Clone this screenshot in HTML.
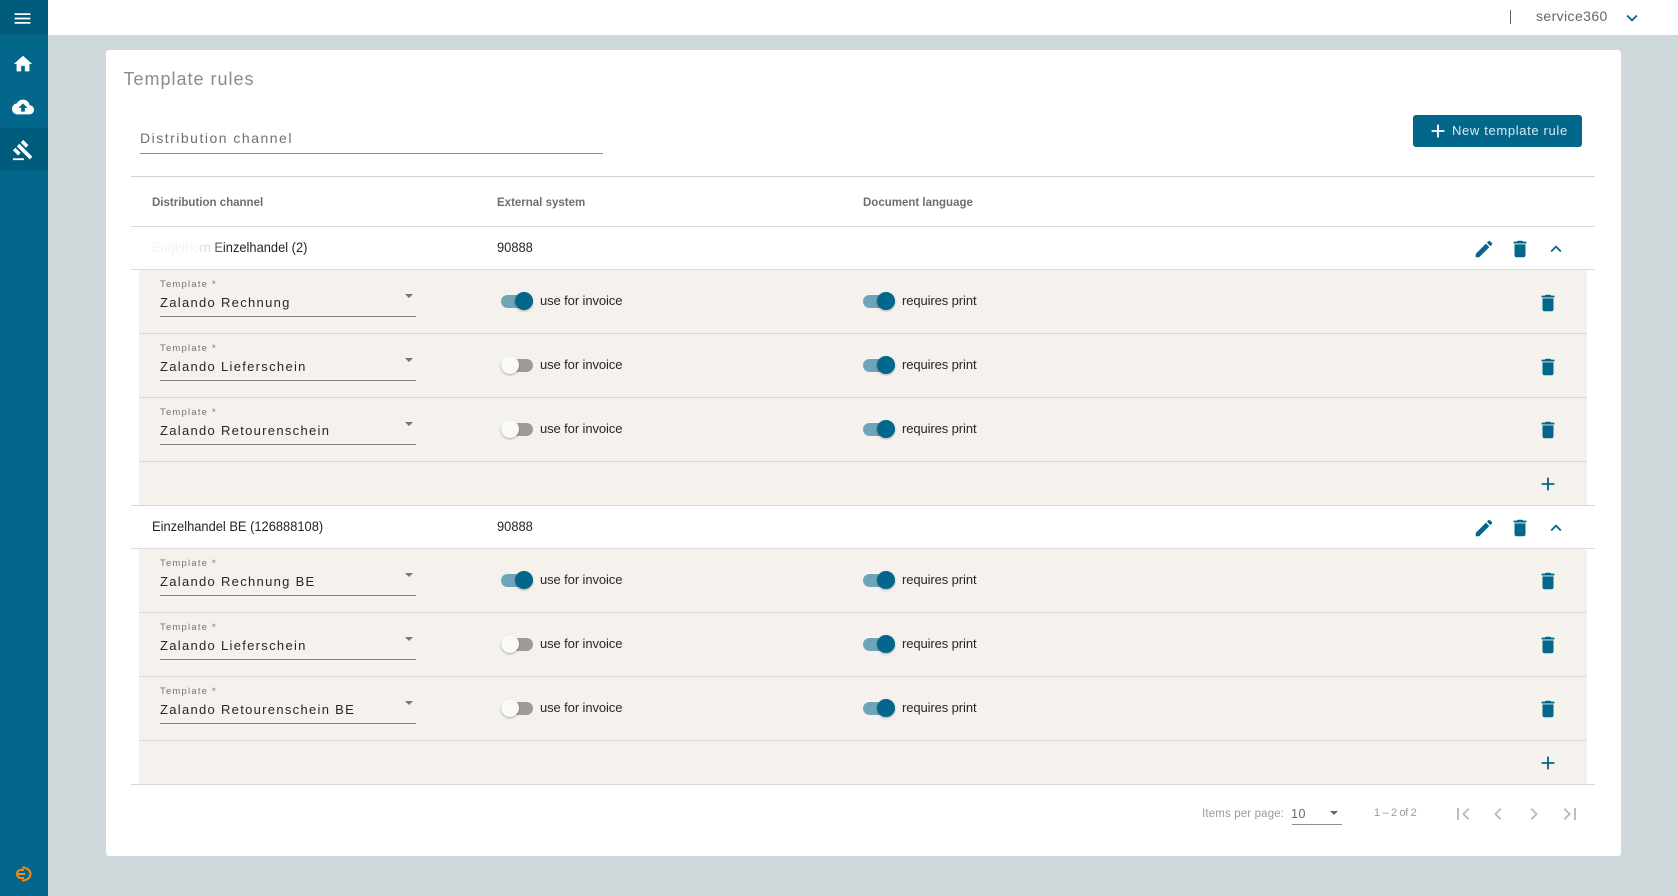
<!DOCTYPE html>
<html><head><meta charset="utf-8"><title>Template rules</title>
<style>
*{box-sizing:border-box}
html,body{margin:0;padding:0;width:1678px;height:896px;overflow:hidden;background:#cfd8db;font-family:"Liberation Sans",sans-serif}
.a,.t,svg.i{position:absolute}
.t{white-space:nowrap;line-height:16px}
svg.i{width:24px;height:24px;fill:#02678a}
svg.s{width:22px;height:22px;margin:1px}
.side{left:0;top:0;width:48px;height:896px;background:#02678a}
.top{left:48px;top:0;width:1630px;height:35px;background:#fff}
.card{left:106px;top:50px;width:1515px;height:806px;background:#fff;border-radius:3px}
.ln{position:absolute;height:1px;background:#dcdcdc}
.row{position:absolute;left:139px;width:1448px;height:64px;background:#f5f2ee;border-bottom:1px solid #dcd9d5}
.row .lb{left:21px;top:7px;font-size:9.5px;letter-spacing:1.2px;color:#77746f}
.row .v{left:21px;top:25px;font-size:13px;letter-spacing:1.3px;color:#26262b}
.row .u{position:absolute;left:21px;top:46px;width:256px;height:1px;background:#85827e}
.row .ar{position:absolute;left:266px;top:24px;width:0;height:0;border-left:4px solid transparent;border-right:4px solid transparent;border-top:4px solid #77746f}
.tr{position:absolute;top:25px;width:32px;height:13px;border-radius:7px}
.on{background:#6fa5b9}.off{background:#9e9b97}
.kn{position:absolute;top:-3px;width:18px;height:18px;border-radius:50%;box-shadow:0 1px 2px rgba(0,0,0,.3)}
.on .kn{left:14px;background:#02678a}.off .kn{left:0;background:#f9f9f9}
.sl{top:23px;font-size:13px;letter-spacing:-.1px;color:#26262b}
.nm{font-size:14px;color:#1f2328;transform:scaleX(.92);transform-origin:left center}
.hd{font-size:11.5px;font-weight:bold;color:#6f6f72;top:195px}
</style></head><body>
<svg width="0" height="0" style="position:absolute"><defs>
<symbol id="del" viewBox="0 0 24 24"><path d="M6 19c0 1.1.9 2 2 2h8c1.1 0 2-.9 2-2V7H6v12zM19 4h-3.5l-1-1h-5l-1 1H5v2h14V4z"/></symbol>
<symbol id="edit" viewBox="0 0 24 24"><path d="M3 17.25V21h3.75L17.81 9.94l-3.75-3.75L3 17.25zM20.71 7.04c.39-.39.39-1.02 0-1.41l-2.34-2.34c-.39-.39-1.02-.39-1.41 0l-1.83 1.83 3.75 3.75 1.83-1.83z"/></symbol>
<symbol id="up" viewBox="0 0 24 24"><path d="M12 8l-6 6 1.41 1.41L12 10.83l4.59 4.58L18 14z"/></symbol>
<symbol id="add" viewBox="0 0 24 24"><path d="M19 13h-6v6h-2v-6H5v-2h6V5h2v6h6v2z"/></symbol>
</defs></svg>

<div class="a side"></div>
<div class="a" style="left:0;top:0;width:48px;height:35px;background:#005c7c"></div>
<div class="a" style="left:0;top:128px;width:48px;height:43px;background:#005c7c"></div>
<svg class="i" style="left:12px;top:8px;width:21px;height:21px;fill:#fff" viewBox="0 0 24 24"><path d="M3 18h18v-2H3v2zm0-5h18v-2H3v2zm0-7v2h18V6H3z"/></svg>
<svg class="i s" style="left:11px;top:52px;fill:#fff" viewBox="0 0 24 24"><path d="M10 20v-6h4v6h5v-8h3L12 3 2 12h3v8z"/></svg>
<svg class="i s" style="left:11px;top:95px;fill:#fff" viewBox="0 0 24 24"><path d="M19.35 10.04C18.67 6.59 15.64 4 12 4 9.11 4 6.6 5.64 5.35 8.04 2.34 8.36 0 10.91 0 14c0 3.31 2.69 6 6 6h13c2.76 0 5-2.24 5-5 0-2.64-2.05-4.78-4.65-4.96zM14 13v4h-4v-4H7l5-5 5 5h-3z"/></svg>
<svg class="i s" style="left:11px;top:138px;fill:#fff" viewBox="0 0 24 24"><path d="M1 21h12v2H1zM5.245 8.07l2.83-2.827 14.14 14.142-2.828 2.828zM12.317 1l5.657 5.656-2.83 2.83-5.654-5.66zM3.825 9.485l5.657 5.657-2.828 2.828-5.657-5.657z"/></svg>
<svg class="a" style="left:15px;top:866px;width:17px;height:16px" viewBox="0 0 17 16" fill="none" stroke="#f08a12" stroke-width="2"><path d="M9 4H5.5C3.5 4 2 6 2 8s1.500 4 3.500 4H9M3 8h7M7 1.500c5 0 8.500 3 8.500 6.500S12 14.500 7 14.500"/></svg>

<div class="a top"></div>
<div class="a" style="left:1510px;top:10px;width:1px;height:14px;background:#666"></div>
<div class="t" style="left:1536px;top:8px;font-size:14px;letter-spacing:.4px;color:#66666a">service360</div>
<svg class="i s" style="left:1620px;top:6px" viewBox="0 0 24 24"><path d="M16.59 8.59L12 13.17 7.41 8.59 6 10l6 6 6-6z"/></svg>

<div class="a card"></div>
<div class="t" style="left:123.5px;top:70px;font-size:18px;line-height:18px;letter-spacing:1px;color:#8e8b8b">Template rules</div>
<div class="t" style="left:140px;top:130px;font-size:14px;letter-spacing:1.5px;color:#6f6f74">Distribution channel</div>
<div class="a" style="left:140px;top:153px;width:463px;height:1px;background:#8c8c8c"></div>

<div class="a" style="left:1413px;top:115px;width:169px;height:32px;background:#02678a;border-radius:3px"></div>
<svg class="i s" style="left:1426px;top:119px;fill:#fff" viewBox="0 0 24 24"><path d="M19 13h-6v6h-2v-6H5v-2h6V5h2v6h6v2z"/></svg>
<div class="t" style="left:1452px;top:123px;font-size:13px;letter-spacing:.65px;color:#dceaf0">New template rule</div>

<div class="ln" style="left:131px;top:176px;width:1464px;background:#d2d2d2"></div>
<div class="t hd" style="left:152px">Distribution channel</div>
<div class="t hd" style="left:497px">External system</div>
<div class="t hd" style="left:863px">Document language</div>
<div class="ln" style="left:131px;top:226px;width:1464px"></div>

<!-- group 1 -->
<div class="t nm" style="left:152px;top:239px"><span style="color:#f1f2f4">Engelho</span><span style="color:#e2e4e8">r</span><span style="color:#d5d8dc">n</span> <span style="color:#555a60">E</span>inzelhandel (2)</div>
<div class="t nm" style="left:497px;top:239px">90888</div>
<svg class="i s" style="left:1472px;top:237px"><use href="#edit"/></svg>
<svg class="i s" style="left:1508px;top:237px"><use href="#del"/></svg>
<svg class="i s" style="left:1544px;top:237px"><use href="#up"/></svg>
<div class="ln" style="left:131px;top:269px;width:1464px"></div>

<div class="row" style="top:270px"><div class="t lb">Template *</div><div class="t v">Zalando Rechnung</div><div class="u"></div><div class="ar"></div>
<div class="tr on" style="left:362px"><div class="kn"></div></div><div class="t sl" style="left:401px">use for invoice</div>
<div class="tr on" style="left:724px"><div class="kn"></div></div><div class="t sl" style="left:763px">requires print</div>
<svg class="i s" style="left:1397px;top:21px"><use href="#del"/></svg></div>
<div class="row" style="top:334px"><div class="t lb">Template *</div><div class="t v">Zalando Lieferschein</div><div class="u"></div><div class="ar"></div>
<div class="tr off" style="left:362px"><div class="kn"></div></div><div class="t sl" style="left:401px">use for invoice</div>
<div class="tr on" style="left:724px"><div class="kn"></div></div><div class="t sl" style="left:763px">requires print</div>
<svg class="i s" style="left:1397px;top:21px"><use href="#del"/></svg></div>
<div class="row" style="top:398px"><div class="t lb">Template *</div><div class="t v">Zalando Retourenschein</div><div class="u"></div><div class="ar"></div>
<div class="tr off" style="left:362px"><div class="kn"></div></div><div class="t sl" style="left:401px">use for invoice</div>
<div class="tr on" style="left:724px"><div class="kn"></div></div><div class="t sl" style="left:763px">requires print</div>
<svg class="i s" style="left:1397px;top:20px"><use href="#del"/></svg></div>
<div class="row" style="top:462px;height:43px;border-bottom:0"><svg class="i s" style="left:1397px;top:10px"><use href="#add"/></svg></div>
<div class="ln" style="left:131px;top:505px;width:1464px;background:#d6d6d6"></div>

<!-- group 2 -->
<div class="t nm" style="left:152px;top:518px">Einzelhandel BE (126888108)</div>
<div class="t nm" style="left:497px;top:518px">90888</div>
<svg class="i s" style="left:1472px;top:516px"><use href="#edit"/></svg>
<svg class="i s" style="left:1508px;top:516px"><use href="#del"/></svg>
<svg class="i s" style="left:1544px;top:516px"><use href="#up"/></svg>
<div class="ln" style="left:131px;top:548px;width:1464px"></div>

<div class="row" style="top:549px"><div class="t lb">Template *</div><div class="t v">Zalando Rechnung BE</div><div class="u"></div><div class="ar"></div>
<div class="tr on" style="left:362px"><div class="kn"></div></div><div class="t sl" style="left:401px">use for invoice</div>
<div class="tr on" style="left:724px"><div class="kn"></div></div><div class="t sl" style="left:763px">requires print</div>
<svg class="i s" style="left:1397px;top:20px"><use href="#del"/></svg></div>
<div class="row" style="top:613px"><div class="t lb">Template *</div><div class="t v">Zalando Lieferschein</div><div class="u"></div><div class="ar"></div>
<div class="tr off" style="left:362px"><div class="kn"></div></div><div class="t sl" style="left:401px">use for invoice</div>
<div class="tr on" style="left:724px"><div class="kn"></div></div><div class="t sl" style="left:763px">requires print</div>
<svg class="i s" style="left:1397px;top:20px"><use href="#del"/></svg></div>
<div class="row" style="top:677px"><div class="t lb">Template *</div><div class="t v">Zalando Retourenschein BE</div><div class="u"></div><div class="ar"></div>
<div class="tr off" style="left:362px"><div class="kn"></div></div><div class="t sl" style="left:401px">use for invoice</div>
<div class="tr on" style="left:724px"><div class="kn"></div></div><div class="t sl" style="left:763px">requires print</div>
<svg class="i s" style="left:1397px;top:20px"><use href="#del"/></svg></div>
<div class="row" style="top:741px;height:43px;border-bottom:0"><svg class="i s" style="left:1397px;top:10px"><use href="#add"/></svg></div>
<div class="ln" style="left:131px;top:784px;width:1464px;background:#d6d6d6"></div>

<!-- pagination -->
<div class="t" style="left:1202px;top:806px;font-size:11.5px;letter-spacing:.15px;color:#9a9a9a">Items per page:</div>
<div class="t" style="left:1291px;top:806px;font-size:12.5px;letter-spacing:.6px;color:#6a6a6a">10</div>
<div class="a" style="left:1330px;top:811px;width:0;height:0;border-left:4px solid transparent;border-right:4px solid transparent;border-top:4px solid #666"></div>
<div class="a" style="left:1292px;top:824px;width:50px;height:1px;background:#8c8c8c"></div>
<div class="t" style="left:1374px;top:805px;font-size:11px;letter-spacing:-.35px;color:#9a9a9a">1 – 2 of 2</div>
<svg class="i" style="left:1451px;top:802px;fill:#bdbdbd" viewBox="0 0 24 24"><path d="M18.41 16.59L13.82 12l4.59-4.59L17 6l-6 6 6 6zM6 6h2v12H6z"/></svg>
<svg class="i" style="left:1486px;top:802px;fill:#bdbdbd" viewBox="0 0 24 24"><path d="M15.41 7.41L14 6l-6 6 6 6 1.41-1.41L10.83 12z"/></svg>
<svg class="i" style="left:1522px;top:802px;fill:#bdbdbd" viewBox="0 0 24 24"><path d="M10 6L8.59 7.41 13.17 12l-4.58 4.59L10 18l6-6z"/></svg>
<svg class="i" style="left:1558px;top:802px;fill:#bdbdbd" viewBox="0 0 24 24"><path d="M5.59 7.41L10.18 12l-4.59 4.59L7 18l6-6-6-6zM16 6h2v12h-2z"/></svg>
</body></html>
